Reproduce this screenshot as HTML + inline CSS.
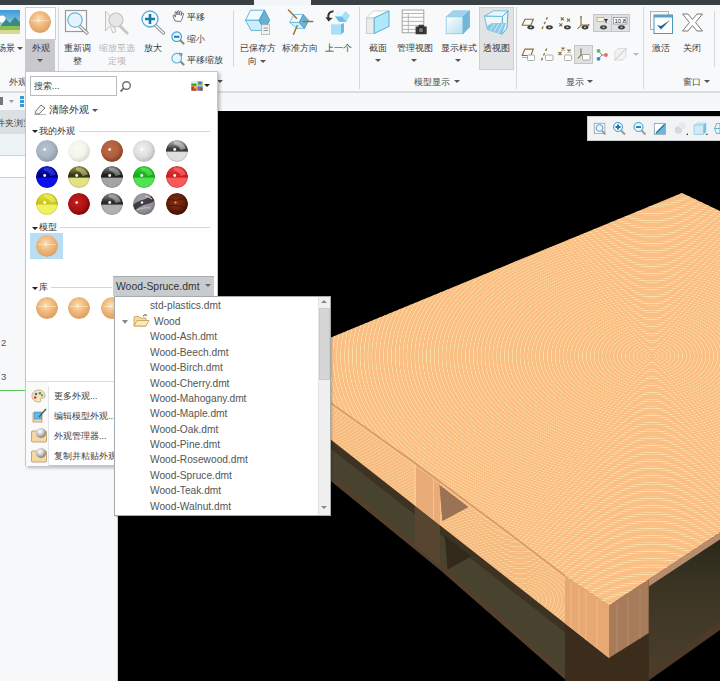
<!DOCTYPE html>
<html><head><meta charset="utf-8">
<style>
*{margin:0;padding:0;box-sizing:border-box}
html,body{width:720px;height:681px;overflow:hidden;background:#000}
body{position:relative;font-family:"Liberation Sans",sans-serif;color:#333}
.a{position:absolute}
.t{position:absolute;white-space:nowrap;font-size:9px;line-height:10px;color:#3a3a3a}
.c{text-align:center}
.sep{position:absolute;width:1px;background:#d3d8db}
.arr{position:absolute;width:0;height:0;border-left:3px solid transparent;border-right:3px solid transparent;border-top:3px solid #555}
.sph{position:absolute;width:22px;height:22px;border-radius:50%}
.li{position:absolute;left:35px;font-size:10.2px;line-height:12px;color:#555;white-space:nowrap}
</style></head><body>
<!-- top dark bar -->
<div class="a" style="left:0;top:0;width:720px;height:5px;background:#3a4144"></div>
<div class="a" style="left:254px;top:0;width:57px;height:5px;background:#f3f5f6"></div>
<!-- ribbon -->
<div class="a" style="left:0;top:5px;width:720px;height:86px;background:#f7f9fa"></div>
<div class="a" style="left:0;top:91px;width:720px;height:2px;background:#dadee1"></div>
<div id="ribbon">
 <!-- scene -->
 <svg class="a" style="left:0;top:10px" width="20" height="24" viewBox="0 0 20 24"><defs><linearGradient id="sky" x1="0" y1="0" x2="0" y2="1"><stop offset="0" stop-color="#3a9ad8"/><stop offset="1" stop-color="#cfe8f5"/></linearGradient></defs><rect width="20" height="24" fill="url(#sky)"/><circle cx="2" cy="9" r="3.5" fill="#fff"/><path d="M0 17 L6 9 L10 13 L15 7 L20 12 L20 17 Z" fill="#3a8a88"/><rect y="16" width="20" height="4" fill="#8cc04a"/><rect y="20" width="20" height="4" fill="#d8d898"/></svg>
 <div class="t" style="left:-3px;top:43px;font-size:9.3px">场景</div>
 <div class="arr" style="left:17px;top:47px"></div>
 <!-- appearance button -->
 <div class="a" style="left:25px;top:7px;width:31px;height:33px;background:#fdfeff;border:1px solid #a9d9f3"></div>
 <div class="a" style="left:25px;top:39px;width:30px;height:32px;background:#c9c9cd"></div>
 <svg class="sph" style="left:29px;top:11px" width="22" height="22" viewBox="0 0 22 22"><defs><radialGradient id="sp1" cx="0.45" cy="0.38" r="0.65"><stop offset="0" stop-color="#fbe0b8"/><stop offset="0.45" stop-color="#f2bc80"/><stop offset="1" stop-color="#dc9a5c"/></radialGradient></defs><circle cx="11" cy="11" r="11" fill="url(#sp1)"/><path d="M2 9.5 H20" stroke="#fde8c8" stroke-width="0.8" opacity="0.8"/><circle cx="9.5" cy="9.5" r="1" fill="#fff" opacity="0.7"/></svg>
 <div class="t c" style="left:25px;top:43px;width:31px;font-size:9.3px">外观</div>
 <div class="arr" style="left:37px;top:59px"></div>
 <div class="sep" style="left:58px;top:7px;height:64px"></div>
 <!-- refit -->
 <svg class="a" style="left:64px;top:9px" width="26" height="26" viewBox="0 0 26 26"><rect x="1.5" y="1.5" width="21" height="21" fill="#fbfbfb" stroke="#9a9a9a" stroke-width="1.2"/><line x1="15.5" y1="17" x2="23" y2="24" stroke="#8a8a8a" stroke-width="3.2" stroke-linecap="round"/><line x1="15.5" y1="17" x2="23" y2="24" stroke="#f4f4f4" stroke-width="1.6" stroke-linecap="round"/><circle cx="11" cy="11" r="7.2" fill="#e4f4fc" stroke="#6ab4d8" stroke-width="1.2"/></svg>
 <div class="t c" style="left:58px;top:43px;width:38px;font-size:9.3px">重新调</div>
 <div class="t c" style="left:58px;top:56px;width:38px;font-size:9.3px">整</div>
 <!-- zoom to selected (disabled) -->
 <svg class="a" style="left:104px;top:9px" width="26" height="26" viewBox="0 0 26 26"><path d="M1.5 2 L1.5 22 L6 17 L9 24 L12 22.5 L9 16 L15 16 Z" fill="#f2f2f2" stroke="#c4c4c4" stroke-width="1"/><line x1="16" y1="17" x2="23" y2="24" stroke="#c8c8c8" stroke-width="3" stroke-linecap="round"/><circle cx="12" cy="11" r="7" fill="#e6e6e6" stroke="#c4c4c4" stroke-width="1.2"/></svg>
 <div class="t c" style="left:96px;top:43px;width:42px;font-size:9.3px;color:#b4b4b4">缩放至选</div>
 <div class="t c" style="left:96px;top:56px;width:42px;font-size:9.3px;color:#b4b4b4">定项</div>
 <!-- zoom in -->
 <svg class="a" style="left:140px;top:9px" width="26" height="26" viewBox="0 0 26 26"><line x1="15.5" y1="16.5" x2="23.5" y2="24" stroke="#8a8a8a" stroke-width="3.2" stroke-linecap="round"/><line x1="15.5" y1="16.5" x2="23.5" y2="24" stroke="#f4f4f4" stroke-width="1.6" stroke-linecap="round"/><circle cx="10" cy="10" r="8" fill="#f4fbff" stroke="#5aaad4" stroke-width="1.3"/><path d="M10 5 V15 M5 10 H15" stroke="#1a78a8" stroke-width="2.6"/></svg>
 <div class="t c" style="left:140px;top:43px;width:26px;font-size:9.3px">放大</div>
 <!-- pan / zoom out / pan zoom -->
 <svg class="a" style="left:172px;top:10px" width="13" height="12" viewBox="0 0 13 12"><path d="M3 11 L1 6 Q1 5 2 5 L3.5 7 L3 2 Q3.5 1 4.5 2 L5 5 L5.5 1 Q6.5 0 7 1 L7 5 L8 1.5 Q9 1 9.5 2 L9 5.5 L10.5 3 Q11.5 3 11.5 4 L10 9 L8.5 11.5 Z" fill="#fff" stroke="#555" stroke-width="0.8"/></svg>
 <div class="t" style="left:187px;top:12px;font-size:9.3px">平移</div>
 <svg class="a" style="left:171px;top:31px" width="14" height="14" viewBox="0 0 14 14"><line x1="8" y1="8" x2="12.5" y2="12.5" stroke="#888" stroke-width="2.2" stroke-linecap="round"/><circle cx="5.7" cy="5.7" r="4.8" fill="#eaf6fc" stroke="#3a9ad0" stroke-width="1.1"/><rect x="3" y="4.8" width="5.4" height="1.9" fill="#1a78a8"/></svg>
 <div class="t" style="left:187px;top:34px;font-size:9.3px">缩小</div>
 <svg class="a" style="left:171px;top:52px" width="14" height="14" viewBox="0 0 14 14"><line x1="8" y1="8" x2="12.5" y2="12.5" stroke="#888" stroke-width="2.2" stroke-linecap="round"/><circle cx="5.7" cy="6.2" r="4.8" fill="#eaf6fc" stroke="#5ab0d8" stroke-width="1.1"/><path d="M8 1 L11 2 L10 4" fill="none" stroke="#2a90c8" stroke-width="1.2"/></svg>
 <div class="t" style="left:187px;top:55px;font-size:9.3px">平移缩放</div>
 <div class="arr" style="left:217px;top:80px"></div>
 <div class="t" style="left:9px;top:77px;font-size:9.3px;color:#4a4a4a">外观</div>
 <div class="sep" style="left:233px;top:10px;height:57px"></div>
 <!-- saved orientation -->
 <svg class="a" style="left:242px;top:6px" width="32" height="32" viewBox="242 6 32 32"><path d="M245.5 20.3 L250.5 10.2 L264.5 10.2 L259.2 20.3 Z" fill="#effaff" stroke="#58aed4" stroke-width="0.9"/><path d="M245.5 20.3 L259.2 20.3 L264.5 30.4 L251 30.4 Z" fill="#ccedfa" stroke="#58aed4" stroke-width="0.9"/><path d="M264.5 10.2 L269.7 20.3 L264.5 30.4 L259.2 20.3 Z" fill="#68b2d4" stroke="#3a98c4" stroke-width="0.9"/><rect x="261.5" y="24.8" width="8.2" height="9.6" fill="#f2f2f2" stroke="#a8a8a8" stroke-width="0.7"/><path d="M263.5 28 H268 M263.5 30.5 H268" stroke="#8a8a8a" stroke-width="0.9"/></svg>
 <div class="t c" style="left:236px;top:43px;width:44px;font-size:9.3px">已保存方</div>
 <div class="t" style="left:248px;top:56px;font-size:9.3px">向</div>
 <div class="arr" style="left:260px;top:60px"></div>
 <!-- standard orientation -->
 <svg class="a" style="left:284px;top:6px" width="32" height="32" viewBox="284 6 32 32"><path d="M289.6 22.4 L294.1 14.5 L303.3 14.4 L299.3 22.4 Z" fill="#f0fbff" stroke="#68b8dc" stroke-width="0.8"/><path d="M289.6 22.4 L299.3 22.4 L304.5 28.5 L297 28.5 Z" fill="#cdeffb" stroke="#68b8dc" stroke-width="0.8"/><path d="M303.3 14.4 L308.7 20.5 L304.5 28.5 L299.3 22.4 Z" fill="#6cb2d2" stroke="#3e9ac4" stroke-width="0.8"/><path d="M288.5 10 L296.5 18.3 M303.5 21.5 L312.7 21.5 M297.2 25.7 L293.5 34.3" stroke="#9a7436" stroke-width="1.5" stroke-linecap="round"/></svg>
 <div class="t c" style="left:280px;top:43px;width:40px;font-size:9.3px">标准方向</div>
 <!-- previous -->
 <svg class="a" style="left:322px;top:6px" width="32" height="32" viewBox="322 6 32 32"><path d="M335 16.5 L338.5 11 L345.5 11 L350 15.5 L346.5 21.8 L339 21.8 Z" fill="#a6e0f8"/><path d="M335 16.5 L338.5 11 L345.5 11 L341.5 16.5 Z" fill="#e8f8ff"/><path d="M335 16.5 L341.5 16.5 L346.5 21.8 L339 21.8 Z" fill="#6cbbe4"/><path d="M331 24.3 L334 23 L344 23 L341 24.3 Z" fill="#e8f8ff"/><rect x="331" y="24.3" width="10" height="10.3" fill="#a8e0f8"/><path d="M341 24.3 L344 23 L344 32 L341 34.6 Z" fill="#6cbbe4"/><path d="M333.5 11.3 Q327.5 11.5 328.3 18.5" fill="none" stroke="#333" stroke-width="2"/><path d="M325.5 17.3 L328.5 21.6 L332.8 18 Z" fill="#333"/></svg>
 <div class="t c" style="left:323px;top:43px;width:30px;font-size:9.3px">上一个</div>
 <div class="sep" style="left:359px;top:7px;height:82px"></div>
 <!-- section -->
 <svg class="a" style="left:362px;top:6px" width="32" height="32" viewBox="362 6 32 32"><path d="M366.5 18 L373.3 10.9 L389 10.9 L374.2 18 Z" fill="#fdfdfd" stroke="#c8c8c8" stroke-width="0.8"/><rect x="366.5" y="18" width="7.7" height="15.5" fill="#ececec" stroke="#c4c4c4" stroke-width="0.8"/><path d="M374.2 18 L389 10.9 L389 26.4 L374.2 33.5 Z" fill="#aee8fa" stroke="#4ea8cc" stroke-width="0.9"/></svg>
 <div class="t c" style="left:364px;top:43px;width:28px;font-size:9.3px">截面</div>
 <div class="arr" style="left:375px;top:59px"></div>
 <!-- manage views -->
 <svg class="a" style="left:398px;top:6px" width="32" height="32" viewBox="398 6 32 32"><rect x="402.2" y="10" width="21.6" height="22.8" fill="#fcfcfc" stroke="#9a9a9a" stroke-width="0.9"/><path d="M402.2 13.5 H423.8 M402.2 17.3 H423.8 M402.2 21.4 H423.8 M402.2 25.4 H423.8 M402.2 29.4 H423.8 M408.3 13.5 V32.8" stroke="#a4a4a4" stroke-width="0.8"/><path d="M415.6 26.5 H418 L419 24.8 H423.5 L424.5 26.5 H426.7 V34.2 H415.6 Z" fill="#3a3a3a"/><circle cx="421" cy="30.2" r="2.8" fill="#777" stroke="#1a1a1a" stroke-width="0.9"/></svg>
 <div class="t c" style="left:395px;top:43px;width:39px;font-size:9.3px">管理视图</div>
 <div class="arr" style="left:411px;top:59px"></div>
 <!-- display style -->
 <svg class="a" style="left:442px;top:6px" width="32" height="32" viewBox="442 6 32 32"><defs><linearGradient id="cf" x1="0" y1="0" x2="1" y2="1"><stop offset="0" stop-color="#ffffff"/><stop offset="1" stop-color="#b4def0"/></linearGradient></defs><path d="M446.2 16.8 L453 10.8 L469.5 10.8 L463.1 16.8 Z" fill="#a4d2ea" stroke="#8cc4e2" stroke-width="0.7"/><rect x="446.2" y="16.8" width="16.9" height="16.9" fill="url(#cf)" stroke="#8ccae6" stroke-width="0.8"/><path d="M463.1 16.8 L469.5 10.8 L469.5 27 L463.1 33.7 Z" fill="#74b6d8" stroke="#6aaed4" stroke-width="0.7"/></svg>
 <div class="t c" style="left:439px;top:43px;width:39px;font-size:9.3px">显示样式</div>
 <div class="arr" style="left:455px;top:59px"></div>
 <!-- perspective -->
 <div class="a" style="left:479px;top:7px;width:35px;height:63px;background:#e1e3e5;border:1px solid #cdd0d2"></div>
 <svg class="a" style="left:480px;top:6px" width="32" height="32" viewBox="480 6 32 32"><path d="M484.3 16.2 L493.5 10.8 L508 10.8 L502.5 16.5 Z" fill="#e6f6fc" stroke="#74bedf" stroke-width="1"/><path d="M484.3 16.2 L502.5 16.5 L502 34.2 L487.5 29.5 Z" fill="#f2f6f8" stroke="#74bedf" stroke-width="1"/><path d="M502.5 16.5 L508 10.8 L507 28 L502 34.2 Z" fill="#e8f6fc" stroke="#5aaed6" stroke-width="1"/><path d="M487 26 L492 23 L506 23 L502 34.2 L487.5 29.5 Z" fill="#86c8e6"/><path d="M490 30 L495 23.5 M494 31.5 L499 23.5 M498 33 L503 23.5" stroke="#cdeaf6" stroke-width="1.1"/></svg>
 <div class="t c" style="left:479px;top:43px;width:35px;font-size:9.3px">透视图</div>
 <div class="t" style="left:414px;top:77px;font-size:9.3px;color:#4a4a4a">模型显示</div>
 <div class="arr" style="left:454px;top:80px"></div>
 <div class="sep" style="left:516px;top:7px;height:82px"></div>
 <!-- display icons row 1 -->
 <div class="a" style="left:593px;top:14px;width:19px;height:18px;background:#dfe1e3;border:1px solid #c3c6c8"></div>
 <div class="a" style="left:611px;top:14px;width:19px;height:18px;background:#dfe1e3;border:1px solid #c3c6c8"></div>
 <div class="a" style="left:574px;top:45px;width:19px;height:19px;background:#dfe1e3;border:1px solid #c3c6c8"></div>
 <svg class="a" style="left:516px;top:10px" width="124" height="58" viewBox="516 10 124 58"><path d="M522.2 25.3 L525 19.2 L533.3 19.2 L530.8 25.3 Z" fill="none" stroke="#8a6c34" stroke-width="1.1"/><ellipse cx="530.8" cy="27.3" rx="3.4" ry="2.1" fill="#3c3c3c"/><ellipse cx="530.8" cy="27.3" rx="1.2" ry="0.9" fill="#bbb"/><path d="M547.4 17.3 L546.3 19.6 M545.3 21.8 L544.2 24.1 M543.2 26.4 L542 29" stroke="#8a6c34" stroke-width="1.3"/><ellipse cx="549.4" cy="27.3" rx="3.4" ry="2.1" fill="#3c3c3c"/><ellipse cx="549.4" cy="27.3" rx="1.2" ry="0.9" fill="#bbb"/><path d="M560.8 17.4 l3 3 M560.8 20.4 l3 -3" stroke="#8a6c34" stroke-width="1.1"/><path d="M567.0 18.7 l3 3 M567.0 21.7 l3 -3" stroke="#8a6c34" stroke-width="1.1"/><path d="M559.3 23.4 l3 3 M559.3 26.4 l3 -3" stroke="#8a6c34" stroke-width="1.1"/><ellipse cx="567.4" cy="27.3" rx="3.4" ry="2.1" fill="#3c3c3c"/><ellipse cx="567.4" cy="27.3" rx="1.2" ry="0.9" fill="#bbb"/><path d="M581 16.5 V25 H589 M581 25 L577.5 29" fill="none" stroke="#8a6c34" stroke-width="1.1"/><path d="M579.8 17.5 L581 15.5 L582.2 17.5 Z M588 23.8 L590 25 L588 26.2 Z" fill="#8a6c34"/><ellipse cx="585.0" cy="27.3" rx="3.4" ry="2.1" fill="#3c3c3c"/><ellipse cx="585.0" cy="27.3" rx="1.2" ry="0.9" fill="#bbb"/><rect x="597" y="17.5" width="7" height="4" fill="#fdf2d4" stroke="#999" stroke-width="0.6"/><path d="M604 19 H608 L606.5 21 V23.5 L605.5 22.5 V21 Z" fill="#222"/><ellipse cx="603.5" cy="27.3" rx="3.4" ry="2.1" fill="#3c3c3c"/><ellipse cx="603.5" cy="27.3" rx="1.2" ry="0.9" fill="#bbb"/><rect x="613.5" y="17.5" width="13.5" height="6.5" fill="#fff" stroke="#777" stroke-width="0.6"/><text x="614.5" y="23" font-size="6" fill="#222" font-family="Liberation Sans">10.8</text><ellipse cx="621.5" cy="27.3" rx="3.4" ry="2.1" fill="#3c3c3c"/><ellipse cx="621.5" cy="27.3" rx="1.2" ry="0.9" fill="#bbb"/><path d="M522.2 55.5 L525 49.1 L533.3 49.1 L530.8 55.5 Z" fill="none" stroke="#8a6c34" stroke-width="1.1"/><path d="M522 57.5 H528" stroke="#999" stroke-width="0.8"/><rect x="527.5" y="55.0" width="7.0" height="5.5" rx="1" fill="#fff" stroke="#9a9a9a" stroke-width="0.8"/><path d="M546.7 48.5 L545.6 51 M544.6 53.2 L543.5 55.6 M542.5 57.8 L541.5 60.5" stroke="#8a6c34" stroke-width="1.3"/><rect x="545.5" y="55.0" width="7.5" height="5.5" rx="1" fill="#fff" stroke="#9a9a9a" stroke-width="0.8"/><path d="M561.5 47.5 l3 3 M561.5 50.5 l3 -3" stroke="#8a6c34" stroke-width="1.1"/><path d="M567.5 49.5 l3 3 M567.5 52.5 l3 -3" stroke="#8a6c34" stroke-width="1.1"/><path d="M558.5 52.0 l3 3 M558.5 55.0 l3 -3" stroke="#8a6c34" stroke-width="1.1"/><rect x="564.5" y="55.0" width="7.0" height="5.5" rx="1" fill="#fff" stroke="#9a9a9a" stroke-width="0.8"/><path d="M581 48.5 V55 H587.5 M581 55 L578 58.5" fill="none" stroke="#8a6c34" stroke-width="1.1"/><rect x="582.5" y="54.5" width="7.5" height="5.5" rx="1" fill="#fff" stroke="#9a9a9a" stroke-width="0.8"/><path d="M598.5 50.8 L602 55 L606 55 M602 55 L598.5 58.8" fill="none" stroke="#8a8a8a" stroke-width="1"/><circle cx="598.5" cy="50.8" r="1.9" fill="#5cb85c"/><circle cx="598.5" cy="58.8" r="1.9" fill="#3a88c8"/><circle cx="606" cy="55" r="1.9" fill="#e86a6a"/><path d="M615 51.5 L618 48.5 L626 48.5 L626 57 L623 60 L615 60 Z" fill="#f2f2f2" stroke="#d6d6d6" stroke-width="0.8"/><path d="M614.5 60.5 L626.5 48" stroke="#c4c4c4" stroke-width="1"/></svg>
 <div class="arr" style="left:633px;top:53px;border-top-color:#bbb"></div>
 <div class="t" style="left:566px;top:77px;font-size:9.3px;color:#4a4a4a">显示</div>
 <div class="arr" style="left:587px;top:80px"></div>
 <div class="sep" style="left:643px;top:7px;height:82px"></div>
 <!-- activate -->
 <svg class="a" style="left:649px;top:10px" width="25" height="25" viewBox="0 0 25 25"><rect x="1.5" y="1.5" width="18" height="18" fill="#f8f8f8" stroke="#aaa" stroke-width="0.9"/><rect x="5" y="5" width="18.5" height="18.5" fill="#fdfdfd" stroke="#4a98c0" stroke-width="1"/><rect x="5" y="5" width="18.5" height="2.5" fill="#5aa0c8"/><path d="M8 15 L12 19.5 L21 10 L12 16 Z" fill="#1a6a98"/></svg>
 <div class="t c" style="left:647px;top:43px;width:28px;font-size:9.3px">激活</div>
 <!-- close -->
 <svg class="a" style="left:681px;top:13px" width="23" height="19" viewBox="0 0 23 19"><path d="M1.5 1 L7 1 L11.5 6.5 L16 1 L21.5 1 L14.5 9.5 L21.5 18 L16 18 L11.5 12.5 L7 18 L1.5 18 L8.5 9.5 Z" fill="#fff" stroke="#6a6a6a" stroke-width="0.9"/></svg>
 <div class="t c" style="left:678px;top:43px;width:28px;font-size:9.3px">关闭</div>
 <div class="sep" style="left:714px;top:11px;height:56px"></div>
 <div class="t" style="left:683px;top:77px;font-size:9.3px;color:#4a4a4a">窗口</div>
 <div class="arr" style="left:704px;top:80px"></div>
</div>
<!-- strip below ribbon -->
<div class="a" style="left:0;top:93px;width:720px;height:17px;background:#f5f7f8"></div>
<div class="a" style="left:0;top:110px;width:720px;height:1px;background:#fdfdfd"></div>
<svg class="a" style="left:0;top:95px" width="26" height="13" viewBox="0 0 26 13"><rect x="-3" y="2" width="6" height="8" fill="#777"/><path d="M9 5 L14 5 L11.5 8 Z" fill="#999"/><rect x="20" y="1" width="4" height="3" fill="#3a9ad8"/><rect x="20" y="5" width="4" height="3" fill="#3a9ad8"/><rect x="20" y="9" width="4" height="3" fill="#3a9ad8"/></svg>
<!-- tab bar left panel -->
<div class="a" style="left:0;top:110px;width:118px;height:24px;background:#dce0e2"></div>
<div class="t" style="left:-4px;top:117.5px;font-size:9.3px;color:#444">件夹浏览</div>
<div class="a" style="left:0;top:134px;width:118px;height:22px;background:#eef3f5"></div>
<div class="a" style="left:0;top:155px;width:118px;height:1px;background:#cad2d6"></div>
<div class="a" style="left:0;top:156px;width:118px;height:21px;background:#fff"></div>
<div class="a" style="left:0;top:177px;width:118px;height:1px;background:#cad2d6"></div>
<div class="a" style="left:0;top:178px;width:117px;height:503px;background:#f6f8f9"></div>
<div class="a" style="left:117px;top:110px;width:1px;height:571px;background:#c8ccce"></div>
<div class="t" style="left:1px;top:338px;font-size:9.5px;color:#555">2</div>
<div class="t" style="left:1px;top:372px;font-size:9.5px;color:#555">3</div>
<div class="a" style="left:0;top:389.5px;width:26px;height:1.8px;background:#5cc85c"></div>

<!-- VIEWPORT CONTENT -->
<svg class="a" style="left:0;top:0" width="720" height="681" viewBox="0 0 720 681">
 <defs>
  <linearGradient id="intr" x1="0" y1="0" x2="0" y2="1">
   <stop offset="0" stop-color="#2a281b"/><stop offset="0.35" stop-color="#3c3524"/><stop offset="1" stop-color="#4c3f2b"/>
  </linearGradient>
  <clipPath id="topclip"><polygon points="682,193 720,211 720,532.5 609,605.5 565,576 500,526.5 412,461 333,404.7 272.6,361.4"/></clipPath>
 </defs>
 <!-- interior right of block -->
 <polygon points="648.8,586.5 720,539.5 720,681 648.8,681" fill="url(#intr)"/>
 <polygon points="648,673.3 720,622 720,630 648,681" fill="#4e3a28"/>
 <polygon points="648,681 720,630 720,681" fill="#000"/>
 <!-- reflection under side face -->
 <polygon points="272.6,394 609,658 648.8,633 648.8,681 567,681 440,569.7 331,481 272.6,433.7" fill="#47432f"/>
 <polygon points="272.6,394 609,658 609,667 272.6,403" fill="#3e3222"/>
 <polygon points="272.6,426 331,473 440,562 575,681 567,681 440,569.7 331,481 272.6,433.7" fill="#52402c"/>
 <polygon points="414.7,505 440,524.6 440,566 414.7,546" fill="#584530"/>
 <polygon points="444.7,535.3 471,556.4 447.6,569.4" fill="#33291b"/>
 <polygon points="565,623.3 609,658 648.8,633 648.8,681 565,681" fill="#3c2c1c"/>
 <!-- deck side band right -->
 <polygon points="648.8,579.3 720,532.5 720,539.5 648.8,586.5" fill="#b88c6c"/>
 <!-- side face -->
 <polygon points="272.6,361.4 333,404.7 412,461 500,526.5 565,576 609,605.5 609,658 272.6,394" fill="#f6bb80"/>
 <!-- middle block -->
 <polygon points="413.5,462 440,481 440,524.6 413.5,504" fill="#e9ab77"/>
 <polygon points="413.5,462 416,464 416,506 413.5,504" fill="#f6ca92"/>
 <line x1="433.5" y1="477" x2="433.5" y2="519.5" stroke="#f4c48c" stroke-width="1"/>
 <polygon points="439.6,484.9 468.3,507 442.4,521" fill="#9a7355"/>
 <!-- front block left face -->
 <polygon points="565,576 609,605.5 609,658 565,623.3" fill="#e8a874"/>
 <g stroke="#f3c58e" stroke-width="0.9" opacity="0.8"><line x1="571" y1="582" x2="571" y2="628"/><line x1="579" y1="587" x2="579" y2="634"/><line x1="586" y1="592" x2="586" y2="640"/><line x1="597" y1="599" x2="597" y2="648"/></g>
 <!-- block right face -->
 <polygon points="609,605.5 648.8,579.3 648.8,633 609,658" fill="#a87c5a"/>
 <g stroke="#b89270" stroke-width="0.9" opacity="0.8"><line x1="617" y1="603" x2="617" y2="652"/><line x1="628" y1="596" x2="628" y2="646"/><line x1="640" y1="589" x2="640" y2="639"/></g>
 <!-- top surface -->
 <polygon points="682,193 720,211 720,532.5 609,605.5 565,576 500,526.5 412,461 333,404.7 272.6,361.4" fill="#f9bf84"/>
 
 <!-- groove -->
 
</svg>
<div class="a" style="left:0;top:0;width:720px;height:681px;clip-path:polygon(682px 193px,720px 211px,720px 532.5px,609px 605.5px,565px 576px,500px 526.5px,412px 461px,333px 404.7px,272.6px 361.4px);background:repeating-radial-gradient(ellipse 160% 100% at 652px 356px,rgba(255,232,176,0) 0px,rgba(255,232,176,0) 2.6px,rgba(255,234,178,.85) 3.2px,rgba(255,232,176,0) 3.9px)"></div>
<div class="a" style="left:0;top:0;width:720px;height:681px;clip-path:polygon(272.6px 361.4px,333px 404.7px,412px 461px,413.5px 462px,413.5px 504px,272.6px 394px);background:repeating-radial-gradient(ellipse 150% 100% at 300px 400px,rgba(255,232,176,0) 0px,rgba(255,232,176,0) 2.6px,rgba(255,232,176,.7) 3.2px,rgba(255,232,176,0) 3.9px)"></div>
<div class="a" style="left:0;top:0;width:720px;height:681px;clip-path:polygon(440px 481px,500px 526.5px,565px 576px,565px 623.3px,440px 524.6px);background:repeating-radial-gradient(ellipse 150% 100% at 520px 600px,rgba(255,232,176,0) 0px,rgba(255,232,176,0) 2.6px,rgba(255,232,176,.7) 3.2px,rgba(255,232,176,0) 3.9px)"></div>
<svg class="a" style="left:260px;top:350px" width="360" height="270" viewBox="260 350 360 270"><polygon points="439.6,484.9 468.3,507 442.4,521" fill="#9a7355"/><polyline points="272.6,361.4 333,404.7 412,461 500,526.5 565,576" fill="none" stroke="#d8996a" stroke-width="1.6"/><polyline points="273,363.5 333.5,407 412.5,463.3 500.5,528.8 565,578.3" fill="none" stroke="#ffd9a0" stroke-width="0.7" opacity="0.7"/></svg>
<!-- viewport toolbar -->
<div class="a" style="left:587px;top:116px;width:140px;height:25px;background:#f1f3f4;border:1px solid #c9ced1"></div>
<svg class="a" style="left:587px;top:116px" width="133" height="25" viewBox="587 116 133 25">
 <rect x="594.3" y="123.3" width="10.5" height="10.2" fill="#f8f8f8" stroke="#a8a8a8" stroke-width="0.9"/>
 <line x1="602" y1="131" x2="605.5" y2="134.3" stroke="#999" stroke-width="1.8"/>
 <circle cx="599.5" cy="128" r="3.4" fill="#e8f6fc" stroke="#4aa2d0" stroke-width="1"/>
 <line x1="621" y1="130.5" x2="625" y2="134.5" stroke="#999" stroke-width="1.8"/>
 <circle cx="618" cy="127" r="4.5" fill="#eef8fc" stroke="#3a98cc" stroke-width="1"/>
 <path d="M618 124.5 V129.5 M615.5 127 H620.5" stroke="#1a78a8" stroke-width="1.8"/>
 <line x1="641.5" y1="130.5" x2="645.5" y2="134.5" stroke="#999" stroke-width="1.8"/>
 <circle cx="638.5" cy="127" r="4.5" fill="#eef8fc" stroke="#3a98cc" stroke-width="1"/>
 <path d="M636 127 H641" stroke="#1a78a8" stroke-width="1.8"/>
 <rect x="654.3" y="123.5" width="11.2" height="10.8" fill="#6cb6da" stroke="#a0a0a0" stroke-width="0.8"/>
 <path d="M654.7 124 L664.5 124 L655 134 Z" fill="#fff"/>
 <path d="M656 133 L664.5 124.5" stroke="#1a6898" stroke-width="1.1"/>
 <circle cx="678.5" cy="130" r="3.8" fill="#d8d8d8"/><circle cx="682.5" cy="125.5" r="3.5" fill="#e8e8e8"/>
 <path d="M686 135 L688 133 L688 135 Z" fill="#444"/>
 <path d="M694 125 L697 122.5 L706.2 122.5 L703.5 125 Z" fill="#c0e4f4"/>
 <rect x="694" y="125" width="9.5" height="9.5" fill="#cfeaf6" stroke="#7cc0e0" stroke-width="0.6"/>
 <path d="M703.5 125 L706.2 122.5 L706.2 132 L703.5 134.5 Z" fill="#7cc0e0"/>
 <path d="M705.5 135 L707.5 133 L707.5 135 Z" fill="#444"/>
 <path d="M714.5 128.5 L716.5 123.5 L720 123.5 L720 133.5 L716.5 133.5 Z" fill="#e6f4fa" stroke="#5aaad4" stroke-width="0.9"/>
 <line x1="714.5" y1="128.5" x2="720" y2="128.5" stroke="#5aaad4" stroke-width="0.9"/>
</svg>

<!-- POPUP -->
<div class="a" style="left:25px;top:71px;width:193px;height:395px;background:#fff;border:1px solid #c4c7c9;box-shadow:2px 2px 3px rgba(0,0,0,.25)">
 <!-- search -->
 <div class="a" style="left:4px;top:4px;width:87px;height:20px;border:1px solid #b9bcbe;background:#fff"></div>
 <div class="t" style="left:8px;top:9px;font-size:9px;color:#444">搜索...</div>
 <svg class="a" style="left:93px;top:8px" width="13" height="13" viewBox="0 0 13 13"><circle cx="7.5" cy="5.5" r="3.8" fill="none" stroke="#6a7276" stroke-width="1.4"/><line x1="4.8" y1="8.2" x2="1.5" y2="11.5" stroke="#6a7276" stroke-width="1.8"/></svg>
 <svg class="a" style="left:165px;top:9px" width="12" height="10" viewBox="0 0 12 10"><rect x="0" y="0" width="12" height="10" fill="#ece8dc"/><rect x="0.3" y="0.3" width="5.2" height="4.4" fill="#d8f0f8"/><rect x="0.3" y="2.6" width="5.2" height="2.1" fill="#2a9a2a"/><rect x="6.3" y="0.3" width="5.4" height="4.4" fill="#9ad040"/><rect x="7.5" y="0.8" width="3" height="2.5" fill="#4a6ae0"/><rect x="0.3" y="5.3" width="5.2" height="4.4" fill="#c83a18"/><rect x="3" y="5.5" width="2.5" height="2" fill="#f0c040"/><rect x="6.3" y="5.3" width="5.4" height="4.4" fill="#4a7ad8"/><rect x="9" y="7" width="2.5" height="2.5" fill="#c04a20"/></svg>
 <div class="arr" style="left:178px;top:12px;border-top-color:#222"></div>
 <!-- clear appearance -->
 <svg class="a" style="left:7px;top:31px" width="14" height="12" viewBox="0 0 14 12"><path d="M2 9 L8 2 L12 5 L6 11 L3 11 Z" fill="#f4f4f4" stroke="#666" stroke-width="0.9"/><line x1="1" y1="11.5" x2="13" y2="11.5" stroke="#888" stroke-width="0.6"/></svg>
 <div class="t" style="left:23px;top:33px;font-size:9.5px;color:#333">清除外观</div>
 <div class="arr" style="left:66px;top:37px"></div>
 <!-- my appearances -->
 <div class="arr" style="left:6px;top:58px;border-top-color:#222"></div>
 <div class="t" style="left:13px;top:54px;font-size:9.2px;color:#333">我的外观</div>
 <div class="a" style="left:53px;top:59px;width:131px;height:1px;background:#d3d6d8"></div>
 <svg class="sph" style="left:10px;top:68px" width="22" height="22" viewBox="0 0 22 22"><defs><radialGradient id="sp2" cx="0.42" cy="0.4" r="0.62"><stop offset="0" stop-color="#b8c4d0"/><stop offset="0.6" stop-color="#a9b5c2"/><stop offset="1" stop-color="#8c9aa8"/></radialGradient></defs><circle cx="11" cy="11" r="11" fill="url(#sp2)"/><circle cx="8.7" cy="9.5" r="1.3" fill="#fff" opacity="0.95"/></svg>
 <svg class="sph" style="left:42px;top:68px" width="22" height="22" viewBox="0 0 22 22"><defs><radialGradient id="sp3" cx="0.42" cy="0.4" r="0.62"><stop offset="0" stop-color="#fafaf6"/><stop offset="0.6" stop-color="#f4f4ec"/><stop offset="1" stop-color="#d8d8cc"/></radialGradient></defs><circle cx="11" cy="11" r="11" fill="url(#sp3)"/></svg>
 <svg class="sph" style="left:75px;top:68px" width="22" height="22" viewBox="0 0 22 22"><defs><radialGradient id="sp4" cx="0.42" cy="0.4" r="0.62"><stop offset="0" stop-color="#bc6c48"/><stop offset="0.6" stop-color="#b0603c"/><stop offset="1" stop-color="#84401f"/></radialGradient></defs><circle cx="11" cy="11" r="11" fill="url(#sp4)"/><circle cx="8.7" cy="9.5" r="1.3" fill="#fff" opacity="0.95"/></svg>
 <svg class="sph" style="left:107px;top:68px" width="22" height="22" viewBox="0 0 22 22"><defs><radialGradient id="sp5" cx="0.42" cy="0.4" r="0.62"><stop offset="0" stop-color="#f0f0f0"/><stop offset="0.6" stop-color="#dedede"/><stop offset="1" stop-color="#bcbcbc"/></radialGradient></defs><circle cx="11" cy="11" r="11" fill="url(#sp5)"/><circle cx="8.7" cy="9.5" r="1.3" fill="#fff" opacity="0.95"/></svg>
 <svg class="sph" style="left:140px;top:68px" width="22" height="22" viewBox="0 0 22 22"><defs><linearGradient id="sp6" x1="0" y1="0" x2="0" y2="1"><stop offset="0" stop-color="#c8c8c8"/><stop offset="0.40" stop-color="#3a3a3a"/><stop offset="0.5" stop-color="#3a3a3a"/><stop offset="0.56" stop-color="#dedede"/><stop offset="1" stop-color="#dedede"/></linearGradient><clipPath id="csp6"><circle cx="11" cy="11" r="11"/></clipPath></defs><circle cx="11" cy="11" r="11" fill="url(#sp6)"/><g clip-path="url(#csp6)"><path d="M8 1.5 Q17 1.5 20 8.5 L14.5 10 Q13.5 5.5 8 4.5 Z" fill="#f4f4f4" opacity="0.45"/><circle cx="11" cy="11" r="10.5" fill="none" stroke="#000" stroke-opacity="0.12" stroke-width="1.2"/></g><circle cx="8.7" cy="9.5" r="1.4" fill="#fff"/></svg>
 <svg class="sph" style="left:10px;top:94px" width="22" height="22" viewBox="0 0 22 22"><defs><linearGradient id="sp7" x1="0" y1="0" x2="0" y2="1"><stop offset="0" stop-color="#1020e0"/><stop offset="0.40" stop-color="#000080"/><stop offset="0.5" stop-color="#000080"/><stop offset="0.56" stop-color="#0a10ee"/><stop offset="1" stop-color="#0a10ee"/></linearGradient><clipPath id="csp7"><circle cx="11" cy="11" r="11"/></clipPath></defs><circle cx="11" cy="11" r="11" fill="url(#sp7)"/><g clip-path="url(#csp7)"><path d="M8 1.5 Q17 1.5 20 8.5 L14.5 10 Q13.5 5.5 8 4.5 Z" fill="#4a5aff" opacity="0.45"/><circle cx="11" cy="11" r="10.5" fill="none" stroke="#000" stroke-opacity="0.12" stroke-width="1.2"/></g><circle cx="8.7" cy="9.5" r="1.4" fill="#fff"/></svg>
 <svg class="sph" style="left:42px;top:94px" width="22" height="22" viewBox="0 0 22 22"><defs><linearGradient id="sp8" x1="0" y1="0" x2="0" y2="1"><stop offset="0" stop-color="#a0a050"/><stop offset="0.40" stop-color="#383810"/><stop offset="0.5" stop-color="#383810"/><stop offset="0.56" stop-color="#e2e284"/><stop offset="1" stop-color="#e2e284"/></linearGradient><clipPath id="csp8"><circle cx="11" cy="11" r="11"/></clipPath></defs><circle cx="11" cy="11" r="11" fill="url(#sp8)"/><g clip-path="url(#csp8)"><path d="M8 1.5 Q17 1.5 20 8.5 L14.5 10 Q13.5 5.5 8 4.5 Z" fill="#f0f0b0" opacity="0.45"/><circle cx="11" cy="11" r="10.5" fill="none" stroke="#000" stroke-opacity="0.12" stroke-width="1.2"/></g><circle cx="8.7" cy="9.5" r="1.4" fill="#fff"/></svg>
 <svg class="sph" style="left:75px;top:94px" width="22" height="22" viewBox="0 0 22 22"><defs><linearGradient id="sp9" x1="0" y1="0" x2="0" y2="1"><stop offset="0" stop-color="#8a8a8a"/><stop offset="0.40" stop-color="#1e1e1e"/><stop offset="0.5" stop-color="#1e1e1e"/><stop offset="0.56" stop-color="#a4a4a4"/><stop offset="1" stop-color="#a4a4a4"/></linearGradient><clipPath id="csp9"><circle cx="11" cy="11" r="11"/></clipPath></defs><circle cx="11" cy="11" r="11" fill="url(#sp9)"/><g clip-path="url(#csp9)"><path d="M8 1.5 Q17 1.5 20 8.5 L14.5 10 Q13.5 5.5 8 4.5 Z" fill="#d0d0d0" opacity="0.45"/><circle cx="11" cy="11" r="10.5" fill="none" stroke="#000" stroke-opacity="0.12" stroke-width="1.2"/></g><circle cx="8.7" cy="9.5" r="1.4" fill="#fff"/></svg>
 <svg class="sph" style="left:107px;top:94px" width="22" height="22" viewBox="0 0 22 22"><defs><linearGradient id="sp10" x1="0" y1="0" x2="0" y2="1"><stop offset="0" stop-color="#40d840"/><stop offset="0.40" stop-color="#18b018"/><stop offset="0.5" stop-color="#18b018"/><stop offset="0.56" stop-color="#52e252"/><stop offset="1" stop-color="#52e252"/></linearGradient><clipPath id="csp10"><circle cx="11" cy="11" r="11"/></clipPath></defs><circle cx="11" cy="11" r="11" fill="url(#sp10)"/><g clip-path="url(#csp10)"><path d="M8 1.5 Q17 1.5 20 8.5 L14.5 10 Q13.5 5.5 8 4.5 Z" fill="#80f080" opacity="0.45"/><circle cx="11" cy="11" r="10.5" fill="none" stroke="#000" stroke-opacity="0.12" stroke-width="1.2"/></g><circle cx="8.7" cy="9.5" r="1.4" fill="#fff"/></svg>
 <svg class="sph" style="left:140px;top:94px" width="22" height="22" viewBox="0 0 22 22"><defs><linearGradient id="sp11" x1="0" y1="0" x2="0" y2="1"><stop offset="0" stop-color="#f04848"/><stop offset="0.40" stop-color="#d02020"/><stop offset="0.5" stop-color="#d02020"/><stop offset="0.56" stop-color="#f65a5a"/><stop offset="1" stop-color="#f65a5a"/></linearGradient><clipPath id="csp11"><circle cx="11" cy="11" r="11"/></clipPath></defs><circle cx="11" cy="11" r="11" fill="url(#sp11)"/><g clip-path="url(#csp11)"><path d="M8 1.5 Q17 1.5 20 8.5 L14.5 10 Q13.5 5.5 8 4.5 Z" fill="#ff9090" opacity="0.45"/><circle cx="11" cy="11" r="10.5" fill="none" stroke="#000" stroke-opacity="0.12" stroke-width="1.2"/></g><circle cx="8.7" cy="9.5" r="1.4" fill="#fff"/></svg>
 <svg class="sph" style="left:10px;top:121px" width="22" height="22" viewBox="0 0 22 22"><defs><linearGradient id="sp12" x1="0" y1="0" x2="0" y2="1"><stop offset="0" stop-color="#e8e830"/><stop offset="0.40" stop-color="#c8c820"/><stop offset="0.5" stop-color="#c8c820"/><stop offset="0.56" stop-color="#f2f260"/><stop offset="1" stop-color="#f2f260"/></linearGradient><clipPath id="csp12"><circle cx="11" cy="11" r="11"/></clipPath></defs><circle cx="11" cy="11" r="11" fill="url(#sp12)"/><g clip-path="url(#csp12)"><path d="M8 1.5 Q17 1.5 20 8.5 L14.5 10 Q13.5 5.5 8 4.5 Z" fill="#fafa90" opacity="0.45"/><circle cx="11" cy="11" r="10.5" fill="none" stroke="#000" stroke-opacity="0.12" stroke-width="1.2"/></g><circle cx="8.7" cy="9.5" r="1.4" fill="#fff"/></svg>
 <svg class="sph" style="left:42px;top:121px" width="22" height="22" viewBox="0 0 22 22"><defs><radialGradient id="sp13" cx="0.42" cy="0.4" r="0.62"><stop offset="0" stop-color="#c02020"/><stop offset="0.6" stop-color="#b01212"/><stop offset="1" stop-color="#800404"/></radialGradient></defs><circle cx="11" cy="11" r="11" fill="url(#sp13)"/><circle cx="8.7" cy="9.5" r="1.3" fill="#fff" opacity="0.95"/></svg>
 <svg class="sph" style="left:75px;top:121px" width="22" height="22" viewBox="0 0 22 22"><defs><linearGradient id="sp14" x1="0" y1="0" x2="0" y2="1"><stop offset="0" stop-color="#9a9a9a"/><stop offset="0.40" stop-color="#2a2a2a"/><stop offset="0.5" stop-color="#2a2a2a"/><stop offset="0.56" stop-color="#b0b0b0"/><stop offset="1" stop-color="#b0b0b0"/></linearGradient><clipPath id="csp14"><circle cx="11" cy="11" r="11"/></clipPath></defs><circle cx="11" cy="11" r="11" fill="url(#sp14)"/><g clip-path="url(#csp14)"><path d="M8 1.5 Q17 1.5 20 8.5 L14.5 10 Q13.5 5.5 8 4.5 Z" fill="#d8d8d8" opacity="0.45"/><circle cx="11" cy="11" r="10.5" fill="none" stroke="#000" stroke-opacity="0.12" stroke-width="1.2"/></g><circle cx="8.7" cy="9.5" r="1.4" fill="#fff"/></svg>
 <svg class="sph" style="left:107px;top:121px" width="22" height="22" viewBox="0 0 22 22"><defs><radialGradient id="mbl" cx="0.45" cy="0.4" r="0.65"><stop offset="0" stop-color="#b0acb4"/><stop offset="0.7" stop-color="#8e8a96"/><stop offset="1" stop-color="#6a6672"/></radialGradient><clipPath id="mclip"><circle cx="11" cy="11" r="11"/></clipPath></defs><circle cx="11" cy="11" r="11" fill="url(#mbl)"/><g clip-path="url(#mclip)"><path d="M0 12 Q6 7 11 6.5 Q16 5 22 1 L22 8 Q16 11 11 12 Q5 14 0 19 Z" fill="#2a2430" opacity="0.8"/><path d="M4 17 Q10 14 18 15" stroke="#d8c8b0" stroke-width="1.2" fill="none" opacity="0.8"/><path d="M12 3 Q16 4 19 6" stroke="#e0d8d0" stroke-width="1" fill="none"/></g><circle cx="9" cy="9.5" r="1.2" fill="#fff"/></svg>
 <svg class="sph" style="left:140px;top:121px" width="22" height="22" viewBox="0 0 22 22"><defs><radialGradient id="drd" cx="0.45" cy="0.42" r="0.62"><stop offset="0" stop-color="#8a3418"/><stop offset="0.6" stop-color="#66200a"/><stop offset="1" stop-color="#3a0e04"/></radialGradient><clipPath id="dclip"><circle cx="11" cy="11" r="11"/></clipPath></defs><circle cx="11" cy="11" r="11" fill="url(#drd)"/><g clip-path="url(#dclip)" stroke="#3a0e04" stroke-width="0.9" fill="none" opacity="0.7"><path d="M2 6 Q8 9 20 5"/><path d="M1 13 Q9 11 21 15"/><path d="M5 19 Q11 16 17 20"/></g><circle cx="9.5" cy="9.5" r="1" fill="#f0c0a0" opacity="0.8"/></svg>
 <!-- model -->
 <div class="arr" style="left:6px;top:155px;border-top-color:#222"></div>
 <div class="t" style="left:13px;top:150px;font-size:9.2px;color:#333">模型</div>
 <div class="a" style="left:34px;top:155px;width:150px;height:1px;background:#d3d6d8"></div>
 <div class="a" style="left:4px;top:161px;width:33px;height:26px;background:#b8def6"></div>
 <svg class="sph" style="left:10px;top:163px" width="22" height="22" viewBox="0 0 22 22"><defs><radialGradient id="sp17" cx="0.45" cy="0.38" r="0.65"><stop offset="0" stop-color="#fbe0b8"/><stop offset="0.45" stop-color="#f2bc80"/><stop offset="1" stop-color="#dc9a5c"/></radialGradient></defs><circle cx="11" cy="11" r="11" fill="url(#sp17)"/><path d="M2 9.5 H20" stroke="#fde8c8" stroke-width="0.8" opacity="0.8"/><circle cx="9.5" cy="9.5" r="1" fill="#fff" opacity="0.7"/></svg>
 <!-- library -->
 <div class="arr" style="left:6px;top:215px;border-top-color:#222"></div>
 <div class="t" style="left:13px;top:210px;font-size:9.2px;color:#333">库</div>
 <div class="a" style="left:25px;top:215px;width:61px;height:1px;background:#d3d6d8"></div>
 <svg class="sph" style="left:10px;top:225px" width="22" height="22" viewBox="0 0 22 22"><defs><radialGradient id="sp18" cx="0.45" cy="0.38" r="0.65"><stop offset="0" stop-color="#fbe0b8"/><stop offset="0.45" stop-color="#f2bc80"/><stop offset="1" stop-color="#dc9a5c"/></radialGradient></defs><circle cx="11" cy="11" r="11" fill="url(#sp18)"/><path d="M2 9.5 H20" stroke="#fde8c8" stroke-width="0.8" opacity="0.8"/><circle cx="9.5" cy="9.5" r="1" fill="#fff" opacity="0.7"/></svg>
 <svg class="sph" style="left:42px;top:225px" width="22" height="22" viewBox="0 0 22 22"><defs><radialGradient id="sp19" cx="0.45" cy="0.38" r="0.65"><stop offset="0" stop-color="#fbe0b8"/><stop offset="0.45" stop-color="#f2bc80"/><stop offset="1" stop-color="#dc9a5c"/></radialGradient></defs><circle cx="11" cy="11" r="11" fill="url(#sp19)"/><path d="M2 9.5 H20" stroke="#fde8c8" stroke-width="0.8" opacity="0.8"/><circle cx="9.5" cy="9.5" r="1" fill="#fff" opacity="0.7"/></svg>
 <svg class="sph" style="left:75px;top:225px" width="22" height="22" viewBox="0 0 22 22"><defs><radialGradient id="sp20" cx="0.45" cy="0.38" r="0.65"><stop offset="0" stop-color="#fbe0b8"/><stop offset="0.45" stop-color="#f2bc80"/><stop offset="1" stop-color="#dc9a5c"/></radialGradient></defs><circle cx="11" cy="11" r="11" fill="url(#sp20)"/><path d="M2 9.5 H20" stroke="#fde8c8" stroke-width="0.8" opacity="0.8"/><circle cx="9.5" cy="9.5" r="1" fill="#fff" opacity="0.7"/></svg>
 <!-- combo -->
 <div class="a" style="left:87px;top:204px;width:101px;height:20px;background:#c9cccf;border-top:1px solid #a9adb0"></div>
 <div class="t" style="left:90px;top:209px;font-size:10.4px;line-height:12px;color:#333">Wood-Spruce.dmt</div>
 <div class="arr" style="left:179px;top:212px;border-top-color:#666"></div>
 <!-- separator -->
 <div class="a" style="left:0;top:309px;width:192px;height:1px;background:#dcdfe1"></div>
 <div class="a" style="left:0;top:310px;width:22px;height:84px;background:#fafafa"></div>
 <div class="a" style="left:22px;top:314px;width:1px;height:80px;background:#e2e4e6"></div>
 <!-- menu -->
 <svg class="a" style="left:5px;top:317px" width="15" height="14" viewBox="0 0 15 14"><path d="M7.5 1 C12 1 14 4 14 7 C14 9 12 9.5 11 9 C9.5 8.5 9 10 10 11.5 C10 13 8.5 13 7.5 13 C3.5 13 1 10 1 7 C1 3.5 4 1 7.5 1 Z" fill="#f6e6c0" stroke="#b8a078" stroke-width="0.8"/><circle cx="5" cy="5" r="1.3" fill="#3a6ad0"/><circle cx="9" cy="4.3" r="1.3" fill="#40a040"/><circle cx="4.2" cy="8.5" r="1.3" fill="#d83030"/><circle cx="11" cy="6.3" r="1.1" fill="#40a040"/></svg>
 <div class="t" style="left:28px;top:319px;font-size:9px;color:#444">更多外观...</div>
 <svg class="a" style="left:6px;top:336px" width="15" height="15" viewBox="0 0 15 15"><rect x="1" y="5" width="9" height="9" fill="#f0d8a0" stroke="#b89860" stroke-width="0.8"/><rect x="2.5" y="4" width="7" height="7" fill="#60b8e8" stroke="#3a88c0" stroke-width="0.6"/><line x1="7" y1="9" x2="14" y2="1" stroke="#555" stroke-width="1.3"/></svg>
 <div class="t" style="left:28px;top:339px;font-size:9px;color:#444">编辑模型外观...</div>
 <svg class="a" style="left:5px;top:355px" width="17" height="16" viewBox="0 0 17 16"><rect x="0.5" y="4" width="15" height="11" rx="1" fill="#f2d9a6" stroke="#b8955a" stroke-width="0.8"/><circle cx="10" cy="6" r="5" fill="url(#mg)"/><defs><radialGradient id="mg" cx="0.4" cy="0.35" r="0.7"><stop offset="0" stop-color="#fff"/><stop offset="0.5" stop-color="#c8c8c8"/><stop offset="1" stop-color="#707070"/></radialGradient></defs></svg>
 <div class="t" style="left:28px;top:359px;font-size:9px;color:#444">外观管理器...</div>
 <svg class="a" style="left:5px;top:375px" width="17" height="16" viewBox="0 0 17 16"><rect x="0.5" y="4" width="15" height="11" rx="1" fill="#f2d9a6" stroke="#b8955a" stroke-width="0.8"/><circle cx="10" cy="6" r="5" fill="url(#mg)"/></svg>
 <div class="t" style="left:28px;top:379px;font-size:9px;color:#444">复制并粘贴外观</div>
</div>

<!-- LIST -->
<div class="a" style="left:114px;top:296px;width:217px;height:220px;background:#fff;border:1px solid #a7abae;box-shadow:1px 1px 2px rgba(0,0,0,.2);overflow:hidden">
 <div class="li" style="top:3px">std-plastics.dmt</div>
 <div class="arr" style="left:7px;top:23px;border-left-width:3.5px;border-right-width:3.5px;border-top:4px solid #888"></div>
 <svg class="a" style="left:18px;top:16px" width="17" height="15" viewBox="0 0 17 15"><path d="M1 4 L1 13 L13 13 L13 5 L7 5 L6 3.5 L2 3.5 Z" fill="#f5dc9c" stroke="#c09a50" stroke-width="0.8"/><path d="M1 13 L4 7.5 L16 7.5 L13 13 Z" fill="#fbe9b8" stroke="#c09a50" stroke-width="0.8"/><path d="M10 3 Q12 0.5 14 2.5" fill="none" stroke="#333" stroke-width="0.9"/></svg>
 <div class="li" style="left:39px;top:19px">Wood</div>
 <div class="li" style="top:34px">Wood-Ash.dmt</div>
 <div class="li" style="top:49.5px">Wood-Beech.dmt</div>
 <div class="li" style="top:65px">Wood-Birch.dmt</div>
 <div class="li" style="top:80.5px">Wood-Cherry.dmt</div>
 <div class="li" style="top:96px">Wood-Mahogany.dmt</div>
 <div class="li" style="top:111px">Wood-Maple.dmt</div>
 <div class="li" style="top:126.5px">Wood-Oak.dmt</div>
 <div class="li" style="top:142px">Wood-Pine.dmt</div>
 <div class="li" style="top:157px">Wood-Rosewood.dmt</div>
 <div class="li" style="top:173px">Wood-Spruce.dmt</div>
 <div class="li" style="top:188px">Wood-Teak.dmt</div>
 <div class="li" style="top:203.5px">Wood-Walnut.dmt</div>
 <!-- scrollbar -->
 <div class="a" style="left:203px;top:0;width:13px;height:218px;background:#f0f0f0;border-left:1px solid #e4e4e4"></div>
 <div class="a" style="left:206px;top:3px;width:0;height:0;border-left:3px solid transparent;border-right:3px solid transparent;border-bottom:3px solid #888"></div>
 <div class="a" style="left:204px;top:11px;width:11px;height:72px;background:#d6d6d6;border:1px solid #cacaca"></div>
 <div class="a" style="left:206px;top:209px;width:0;height:0;border-left:3px solid transparent;border-right:3px solid transparent;border-top:3px solid #888"></div>
</div>
</body></html>
